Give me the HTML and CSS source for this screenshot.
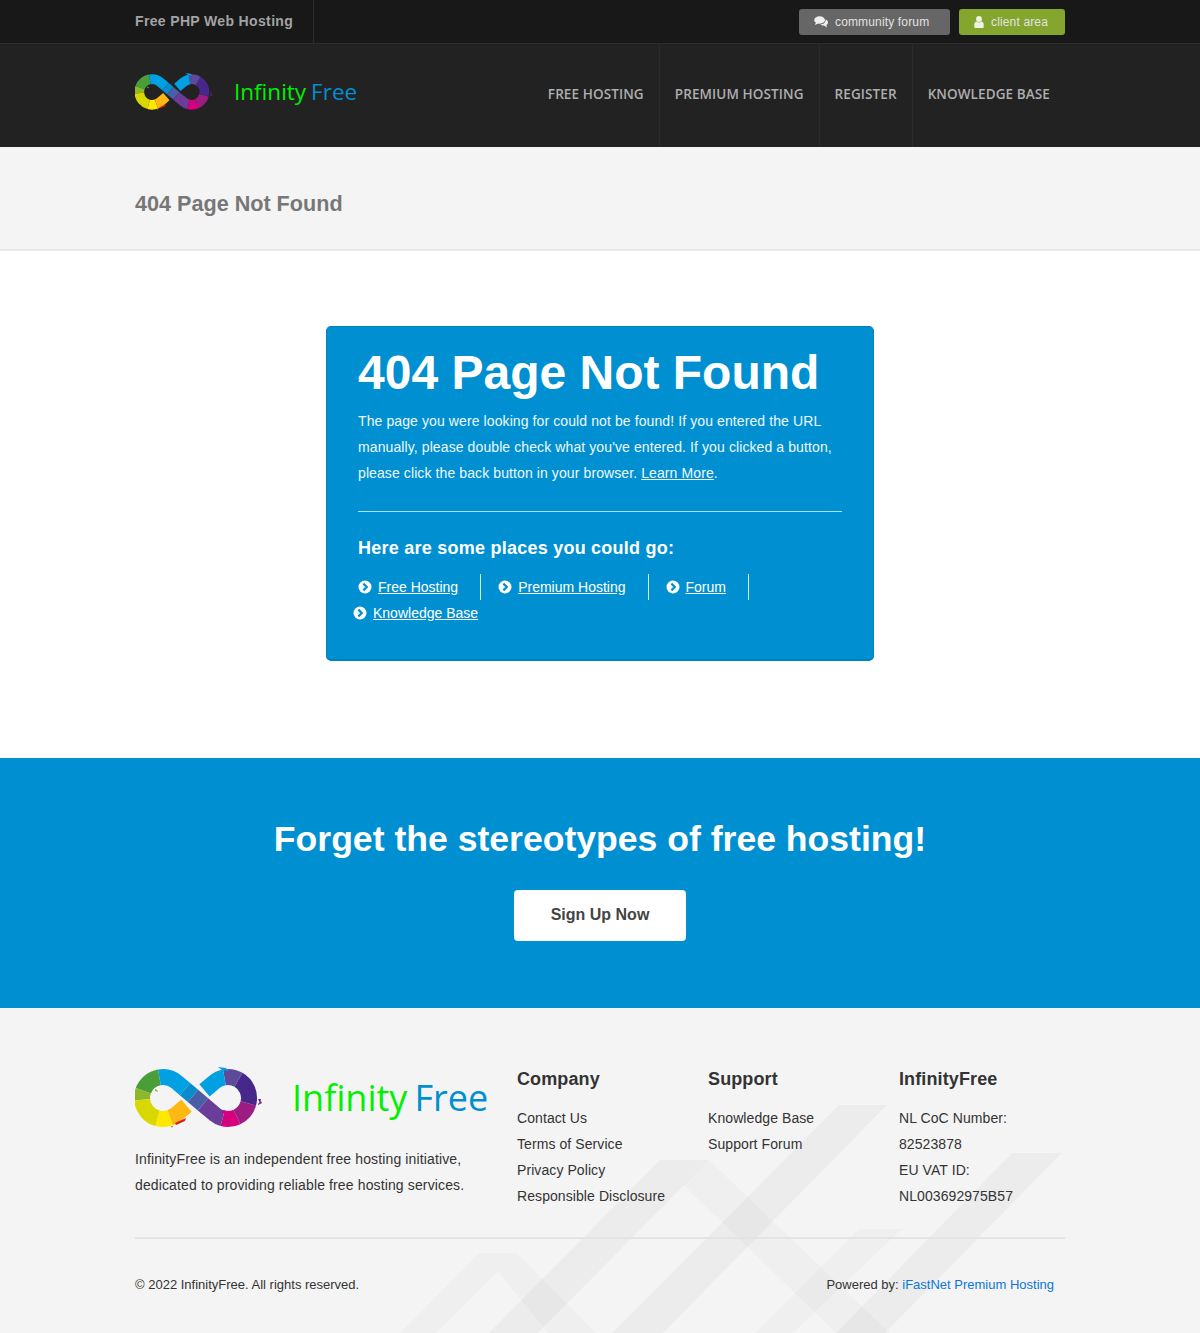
FILE: index.html
```html
<!DOCTYPE html>
<html>
  <head>
    <title>404 Page Not Found</title>
    <link rel="stylesheet" href="styles.css">
  </head>
  <body>
    <svg class="defs" width="0" height="0">
      <symbol id="infinity" viewBox="0 0 128 62">
        <g fill="none" stroke-width="16">
          <!-- linker lus -->
          <path stroke="#4a9e3a" d="M24.4 10.3A21 21 0 0 0 8.3 23.8"/>
          <path stroke="#8cb82b" d="M8.3 23.8A21 21 0 0 0 7.1 32.8"/>
          <path stroke="#d8d800" d="M7.1 32.8A21 21 0 0 0 22.6 51.3"/>
          <path stroke="#ffe800" d="M22.6 51.3A21 21 0 0 0 35.2 50.7"/>
          <path stroke="#fdb813" d="M35.2 50.7A21 21 0 0 0 41.6 47L51.5 38.6"/>
          <!-- rechter lus -->
          <path stroke="#d6007f" d="M87.6 51.3A21 21 0 0 0 101.9 50"/>
          <path stroke="#9c1c82" d="M101.9 50A21 21 0 0 0 113.3 36.4"/>
          <path stroke="#46278a" d="M113.3 36.4A21 21 0 0 0 103.5 12.8"/>
          <path stroke="#5d4a9b" d="M103.5 12.8A21 21 0 0 0 89.4 10.3"/>
          <path stroke="#00a0e3" d="M89.4 10.3A21 21 0 0 0 79.4 15L69.5 23.4"/>
          <!-- diagonaal -->
          <path stroke="#00a0e3" d="M24.4 10.3A21 21 0 0 1 41.6 15L50 22.1"/>
          <path stroke="#0b8bc9" d="M50 22.1L58 28.9"/>
          <path stroke="#4a5ea6" d="M58 28.9L68 37.4"/>
          <path stroke="#6a3d9a" d="M68 37.4L79.4 47A21 21 0 0 0 87.6 51.3"/>
        </g>
        <path fill="#d42027" d="M40 56l11-5-1 3-9 4z"/>
        <path fill="#e8501e" d="M36 59l2 0-1 2z"/>
        <path fill="#8a1a80" d="M123 37l3-3 1 2-4 2z"/>
        <path fill="#46278a" d="M123 32l3 0-1 4z"/>
        <path fill="#00a0e3" d="M83 0l8 1 3 3-7-1z"/>
        <path fill="#d6007f" d="M87 44l3-1 0 3-3 0z"/>
        <path fill="#8cb82b" d="M20 22l2 1 1 2-3-1z"/>
      </symbol>
      <symbol id="i-arrow" viewBox="0 0 14 14">
        <circle cx="7" cy="7" r="6.5" fill="#fff"/>
        <path d="M5.4 3.6L8.8 7L5.4 10.4" fill="none" stroke="#0090d1" stroke-width="2.2"/>
      </symbol>
    </svg>

    <div class="topbar">
      <div class="container topbar-in">
        <div class="tagline">Free PHP Web Hosting</div>
        <div class="top-btns">
          <a class="top-btn grey" href="#">
            <svg class="top-icon" width="14" height="12" viewBox="0 0 14 12">
              <ellipse cx="5.6" cy="4" rx="5.4" ry="3.7" fill="#f0f0f0"/>
              <path d="M2 6l-1 3 4-2z" fill="#f0f0f0"/>
              <path d="M11.6 3.4c1.6.7 2.4 1.8 2.4 3 0 1.1-.7 2-1.7 2.6l.7 2.4-3-1.9c-1.5 0-2.9-.4-3.7-1.2 3 0 5.6-1.8 5.3-4.9z" fill="#f0f0f0"/>
            </svg>
            community forum
          </a>
          <a class="top-btn green" href="#">
            <svg class="top-icon" width="10" height="12" viewBox="0 0 10 12">
              <circle cx="5" cy="3" r="2.9" fill="#eef4e0"/>
              <path d="M0.3 11.2V8.6C0.3 6.8 1.4 5.8 2.7 5.6 3.3 6.2 4.1 6.5 5 6.5S6.7 6.2 7.3 5.6C8.6 5.8 9.7 6.8 9.7 8.6V11.2C9.7 11.7 9.3 12 8.8 12H1.2C.7 12 .3 11.7 .3 11.2z" fill="#eef4e0"/>
            </svg>
            client area
          </a>
        </div>
      </div>
    </div>

    <header class="header">
      <div class="container header-in">
        <a class="logo" href="#">
          <svg class="logo-mark"><use href="#infinity"/></svg>
          <span class="logo-text"><span class="inf">Infinity</span><span class="fr">Free</span></span>
        </a>
        <nav class="nav">
          <a href="#">Free Hosting</a>
          <a href="#">Premium Hosting</a>
          <a href="#">Register</a>
          <a href="#">Knowledge Base</a>
        </nav>
      </div>
    </header>

    <div class="titlebar">
      <div class="container"><h2>404 Page Not Found</h2></div>
    </div>

    <main class="main">
      <div class="card">
        <h1>404 Page Not Found</h1>
        <p>The page you were looking for could not be found! If you entered the URL manually, please double check what you've entered. If you clicked a button, please click the back button in your browser. <a href="#">Learn More</a>.</p>
        <hr>
        <h4>Here are some places you could go:</h4>
        <ul class="places">
          <li><svg class="arrow"><use href="#i-arrow"/></svg><a href="#">Free Hosting</a></li>
          <li><svg class="arrow"><use href="#i-arrow"/></svg><a href="#">Premium Hosting</a></li>
          <li><svg class="arrow"><use href="#i-arrow"/></svg><a href="#">Forum</a></li>
          <li><svg class="arrow"><use href="#i-arrow"/></svg><a href="#">Knowledge Base</a></li>
        </ul>
      </div>
    </main>

    <section class="cta">
      <h2>Forget the stereotypes of free hosting!</h2>
      <a class="cta-btn" href="#">Sign Up Now</a>
    </section>

    <footer class="footer">
      <svg class="footer-bg" width="1200" height="325" viewBox="0 1008 1200 325">
        <g fill="#000" fill-opacity="0.03">
          <path d="M839 1105H887L663 1333H612z"/>
          <path d="M660 1160H709L538 1333H489z"/>
          <path d="M1012 1153H1062L885 1333H836z"/>
        </g>
        <g fill="#000" fill-opacity="0.018">
          <path d="M709 1160L890 1333H836L683 1185z"/>
          <path d="M859 1229H902L793 1333H755z"/>
          <path d="M479 1253H517L436 1333H400z"/>
          <path d="M517 1253L596 1333H548L498 1272z"/>
        </g>
      </svg>
      <div class="container">
        <div class="footer-cols">
          <div class="about">
            <a class="logo logo-big" href="#">
              <svg class="logo-mark"><use href="#infinity"/></svg>
              <span class="logo-text"><span class="inf">Infinity</span><span class="fr">Free</span></span>
            </a>
            <p>InfinityFree is an independent free hosting initiative, dedicated to providing reliable free hosting services.</p>
          </div>
          <div class="col">
            <h4>Company</h4>
            <a href="#">Contact Us</a>
            <a href="#">Terms of Service</a>
            <a href="#">Privacy Policy</a>
            <a href="#">Responsible Disclosure</a>
          </div>
          <div class="col">
            <h4>Support</h4>
            <a href="#">Knowledge Base</a>
            <a href="#">Support Forum</a>
          </div>
          <div class="col">
            <h4>InfinityFree</h4>
            <span>NL CoC Number:</span>
            <span>82523878</span>
            <span>EU VAT ID:</span>
            <span>NL003692975B57</span>
          </div>
        </div>
        <div class="copyright">
          <span>© 2022 InfinityFree. All rights reserved.</span>
          <span class="powered">Powered by: <a href="#">iFastNet Premium Hosting</a></span>
        </div>
      </div>
    </footer>
  </body>
</html>
```

FILE: styles.css
```css
* {
  box-sizing: border-box;
}

body {
  margin: 0;
  font-family: "Liberation Sans", Arial, sans-serif;
  font-size: 14px;
  color: #333;
  background-color: #fff;
}

a {
  text-decoration: none;
  color: inherit;
}

.defs {
  position: absolute;
}

.container {
  width: 930px;
  margin: 0 auto;
}

/* balk bovenaan */
.topbar {
  height: 44px;
  background-color: #181818;
  border-bottom: 1px solid #2c2c2c;
}

.topbar-in {
  display: flex;
  justify-content: space-between;
  height: 43px;
}

.tagline {
  width: 179px;
  border-right: 1px solid #2c2c2c;
  line-height: 42px;
  font-size: 14px;
  font-weight: bold;
  letter-spacing: 0.35px;
  color: #a3a3a3;
}

.top-btns {
  display: flex;
  gap: 9px;
  padding-top: 9px;
}

.top-btn {
  display: flex;
  align-items: center;
  height: 26px;
  padding-left: 15px;
  border-radius: 3px;
  font-size: 12px;
  letter-spacing: 0.15px;
  color: #e2e2e2;
}

.top-btn.grey {
  width: 151px;
  background-color: #666;
}

.top-btn.green {
  width: 106px;
  background-color: #84a62f;
}

.top-icon {
  margin-right: 7px;
}

/* header met logo en menu */
.header {
  height: 103px;
  background-color: #222;
}

.header-in {
  display: flex;
  justify-content: space-between;
  height: 103px;
}

.logo {
  display: flex;
  align-items: center;
  padding-bottom: 7px;
}

.logo-mark {
  width: 78px;
  height: 38px;
  margin-right: 21px;
}

.logo-text {
  display: flex;
  gap: 5px;
  font-family: "Open Sans", sans-serif;
  font-size: 22.5px;
  line-height: 30px;
}

.inf {
  color: #00f000;
}

.fr {
  color: #0090d1;
}

.nav {
  display: flex;
}

.nav a {
  padding: 0 15px;
  border-left: 1px solid #2b2b2b;
  line-height: 101px;
  font-family: "Open Sans", sans-serif;
  font-size: 13.5px;
  font-weight: 600;
  letter-spacing: 0.1px;
  text-transform: uppercase;
  color: #aeaeae;
}

.nav a:first-child {
  border-left: none;
}

/* titel */
.titlebar {
  height: 104px;
  background-color: #f4f4f4;
  border-bottom: 2px solid #e8e8e8;
}

.titlebar h2 {
  margin: 0;
  line-height: 114px;
  font-size: 21.6px;
  color: #777;
}

.main {
  height: 507px;
  padding-top: 75px;
}

.card {
  width: 548px;
  height: 335px;
  margin: 0 auto;
  padding: 0 31px;
  background-color: #0090d1;
  border: 1px solid #0082bd;
  border-bottom-width: 2px;
  border-radius: 5px;
  color: #fff;
}

.card h1 {
  margin: 0;
  padding-top: 15px;
  font-size: 48px;
  line-height: 62px;
}

.card p {
  margin: 4px 0 0;
  line-height: 26px;
  letter-spacing: 0.1px;
  color: #eef8fd;
}

.card p a,
.places a {
  text-decoration: underline;
}

.card hr {
  height: 1px;
  margin: 25px 0 0;
  border: none;
  background-color: #a8e4ff;
}

.card h4 {
  margin: 24px 0 0;
  font-size: 18px;
  line-height: 24px;
  letter-spacing: 0.24px;
}

.places {
  display: flex;
  flex-wrap: wrap;
  margin: 14px 0 0 -5px;
  padding: 0;
  list-style: none;
}

.places li {
  display: flex;
  align-items: center;
  height: 26px;
  margin-right: 17px;
  padding-right: 22px;
  border-right: 1px solid #cfeefc;
}

.places li:first-child {
  margin-left: 5px;
}

.places li:last-child {
  border-right: none;
}

.arrow {
  width: 14px;
  height: 14px;
  margin-right: 6px;
}

/* blauwe balk */
.cta {
  height: 250px;
  padding-top: 59px;
  background-color: #0090d1;
  text-align: center;
}

.cta h2 {
  margin: 0;
  font-size: 35.6px;
  line-height: 44px;
  color: #fff;
}

.cta-btn {
  display: block;
  width: 172px;
  height: 51px;
  margin: 29px auto 0;
  border-radius: 4px;
  background-color: #fff;
  line-height: 49px;
  font-size: 16px;
  font-weight: bold;
  color: #444;
}

/* footer */
.footer {
  position: relative;
  height: 325px;
  overflow: hidden;
  background-color: #f4f4f4;
}

.footer-bg {
  position: absolute;
  top: 0;
  left: 0;
}

.footer .container {
  position: relative;
}

.footer-cols {
  display: grid;
  grid-template-columns: 382px 191px 191px 166px;
  height: 231px;
  padding-top: 59px;
  border-bottom: 2px solid #e4e4e4;
}

.logo-big {
  padding-bottom: 0;
}

.logo-big .logo-mark {
  width: 128px;
  height: 62px;
  margin-right: 29px;
}

.logo-big .logo-text {
  gap: 7px;
  font-size: 36px;
  line-height: 46px;
}

.about p {
  width: 340px;
  margin: 17px 0 0;
  line-height: 26px;
  letter-spacing: 0.13px;
}

.col h4 {
  margin: 0 0 14px;
  font-size: 18px;
  line-height: 24px;
  letter-spacing: 0.12px;
}

.col a,
.col span {
  display: block;
  line-height: 26px;
  letter-spacing: 0.08px;
}

.copyright {
  display: flex;
  justify-content: space-between;
  padding: 36px 11px 0 0;
  line-height: 20px;
  font-size: 13px;
}

.powered a {
  color: #0b76d6;
}
```
